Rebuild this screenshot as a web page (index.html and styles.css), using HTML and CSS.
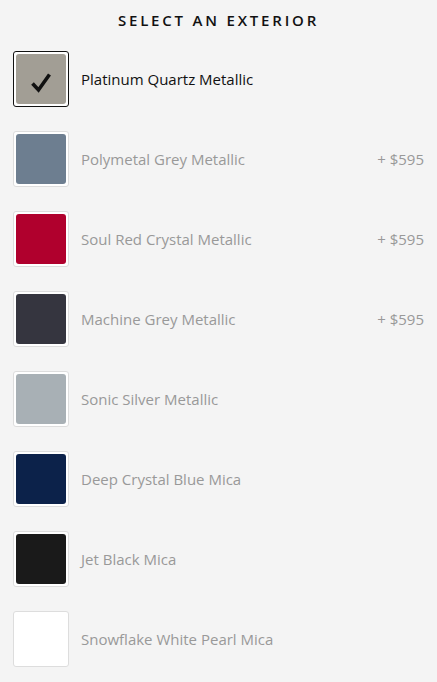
FILE: index.html
```html
<!DOCTYPE html>
<html lang="en">
<head>
  <meta charset="UTF-8" />
  <meta name="viewport" content="width=device-width, initial-scale=1.0" />
  <link rel="stylesheet" href="styles.css">
</head>
<body>
  <h2 class="title">SELECT AN EXTERIOR</h2>

  <ul class="color-list">
    <li class="color-item selected">
      <span class="swatch"><span class="chip" style="background-color: #a29e95;">
        <svg class="check" width="50" height="50" viewBox="0 0 50 50"><path d="M16.5 29.5 L22.5 36 L33.5 20.5" fill="none" stroke="#111" stroke-width="3.6" stroke-linecap="butt" stroke-linejoin="miter"/></svg>
      </span></span>
      <span class="name">Platinum Quartz Metallic</span>
    </li>
    <li class="color-item">
      <span class="swatch"><span class="chip" style="background-color: #6d7e90;"></span></span>
      <span class="name">Polymetal Grey Metallic</span>
      <span class="price">+ $595</span>
    </li>
    <li class="color-item">
      <span class="swatch"><span class="chip" style="background-color: #b0002d;"></span></span>
      <span class="name">Soul Red Crystal Metallic</span>
      <span class="price">+ $595</span>
    </li>
    <li class="color-item">
      <span class="swatch"><span class="chip" style="background-color: #35353f;"></span></span>
      <span class="name">Machine Grey Metallic</span>
      <span class="price">+ $595</span>
    </li>
    <li class="color-item">
      <span class="swatch"><span class="chip" style="background-color: #a8b0b5;"></span></span>
      <span class="name">Sonic Silver Metallic</span>
    </li>
    <li class="color-item">
      <span class="swatch"><span class="chip" style="background-color: #0c224a;"></span></span>
      <span class="name">Deep Crystal Blue Mica</span>
    </li>
    <li class="color-item">
      <span class="swatch"><span class="chip" style="background-color: #1a1a1a;"></span></span>
      <span class="name">Jet Black Mica</span>
    </li>
    <li class="color-item">
      <span class="swatch"><span class="chip" style="background-color: #ffffff;"></span></span>
      <span class="name">Snowflake White Pearl Mica</span>
    </li>
  </ul>
</body>
</html>
```

FILE: styles.css
```css
html, body {
  margin: 0;
  padding: 0;
  font-family: "Open Sans", Arial, sans-serif;
  background-color: #f4f4f4;
  color: #111111;
}

body {
  padding: 10px 13px 0 13px;
}

.title {
  margin: 0 0 21px 0;
  font-size: 15px;
  font-weight: 600;
  letter-spacing: 2.8px;
  text-align: center;
  line-height: 20px;
  color: #111111;
}

.color-list {
  list-style: none;
  margin: 0;
  padding: 0;
  display: flex;
  flex-direction: column;
  gap: 24px;
}

.color-item {
  display: flex;
  align-items: center;
  height: 56px;
}

.swatch {
  width: 56px;
  height: 56px;
  box-sizing: border-box;
  border: 1px solid #dddddd;
  border-radius: 3px;
  background-color: #ffffff;
  padding: 2px;
  flex-shrink: 0;
}

.selected .swatch {
  border-color: #111111;
}

.chip {
  display: block;
  width: 100%;
  height: 100%;
  border-radius: 3px;
  position: relative;
}

.check {
  position: absolute;
  top: 0;
  left: 0;
}

.name {
  margin-left: 12px;
  font-size: 15px;
  color: #999999;
  flex: 1;
}

.selected .name {
  color: #111111;
}

.price {
  font-size: 15px;
  color: #999999;
}
```
